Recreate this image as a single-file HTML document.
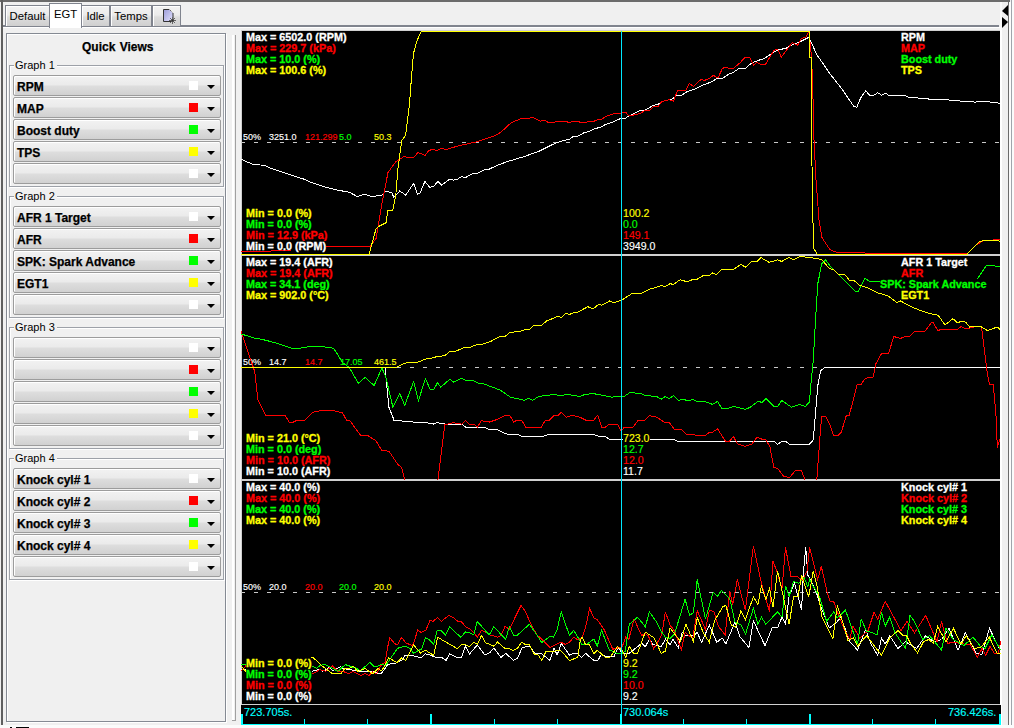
<!DOCTYPE html>
<html><head><meta charset="utf-8">
<style>
*{margin:0;padding:0;box-sizing:border-box}
html,body{width:1014px;height:728px;overflow:hidden;background:#f0f0f0;font-family:"Liberation Sans",sans-serif}
.a{position:absolute}
.tab{position:absolute;top:5px;height:21px;border:1px solid #80848e;border-bottom:none;box-shadow:inset 1px 1px 0 #fff;background:linear-gradient(#f3f3f3 0,#ebebeb 45%,#dddddd 55%,#cfcfcf 100%);font-size:11.3px;color:#000;text-align:center;line-height:19px}
.grp{position:absolute;left:9px;width:215px;height:122px;border:1px solid #9da1a8;box-shadow:inset 1px 1px 0 #fff,1px 1px 0 #fff}
.glab{position:absolute;left:14px;font-size:11px;background:#f0f0f0;padding:0 2px 0 1px;line-height:13px;color:#000}
.cb{position:absolute;left:13px;width:208px;height:21px;border:1px solid #9c9c9c;border-radius:2px;background:linear-gradient(#f2f2f2 0,#ebebeb 45%,#dddddd 55%,#d1d1d1 100%);box-shadow:inset 1px 1px 0 #fff}
.cb b{position:absolute;left:3px;top:4px;font-size:12px;line-height:14px;color:#000;-webkit-text-stroke:0.25px #000}
.cb i{position:absolute;left:175px;top:5px;width:9px;height:9px}
.cb s{position:absolute;left:193px;top:9px;width:0;height:0;border-left:4px solid transparent;border-right:4px solid transparent;border-top:4px solid #000}
.t{position:absolute;font-size:10.8px;font-weight:bold;line-height:11px;white-space:pre;background:#000;-webkit-text-stroke:0.3px currentColor}
.t.h{background:linear-gradient(#000 9px,transparent 9px)}
.v{position:absolute;font-size:10.6px;line-height:11px;white-space:pre;background:linear-gradient(#000 10px,transparent 10px);-webkit-text-stroke:0.15px currentColor}
.s{position:absolute;font-size:9px;line-height:9px;white-space:pre;-webkit-text-stroke:0.15px currentColor}
.W{color:#fff}.R{color:#f00}.G{color:#0f0}.Y{color:#ff0}.C{color:#0ff}
</style></head><body>
<!-- outer frame -->
<div class="a" style="left:0;top:0;width:1010px;height:2px;background:#6b6b6b"></div>
<div class="a" style="left:1px;top:0;width:2px;height:725px;background:#5f5f5f"></div>
<div class="a" style="left:1008px;top:0;width:1px;height:726px;background:#6b6b6b"></div>
<div class="a" style="left:1009px;top:2px;width:2px;height:724px;background:#fbfbfb"></div>
<div class="a" style="left:1011px;top:0;width:1px;height:726px;background:#a0a4ac"></div>
<div class="a" style="left:1012px;top:0;width:2px;height:728px;background:#fbfbfb"></div>
<div class="a" style="left:0;top:725px;width:1014px;height:3px;background:#fbfbfb"></div>
<div class="a" style="left:16px;top:727px;width:13px;height:1px;background:#000"></div>
<div class="a" style="left:10px;top:727px;width:2px;height:1px;background:#000"></div>

<!-- tab bar -->
<div class="a" style="left:3px;top:25px;width:996px;height:2px;background:#80848e"></div>
<div class="a" style="left:3px;top:27px;width:997px;height:1px;background:#fff"></div>
<div class="a" style="left:1000px;top:2px;width:2px;height:28px;background:#fafafa"></div>
<div class="tab" style="left:5px;width:45px"><span style="position:relative;top:1px">Default</span></div>
<div class="tab" style="left:81px;width:29px"><span style="position:relative;top:1px">Idle</span></div>
<div class="tab" style="left:110px;width:42px"><span style="position:relative;top:1px">Temps</span></div>
<div class="tab" style="left:152px;width:29px"></div>
<div class="tab" style="left:49px;top:3px;width:33px;height:25px;background:#fff;line-height:17px;box-shadow:none"><span style="position:relative;top:2px">EGT</span></div>
<svg class="a" style="left:160px;top:7px" width="18" height="18">
<defs><linearGradient id="dg" x1="0" y1="0" x2="1" y2="1"><stop offset="0" stop-color="#9c9cd8"/><stop offset="1" stop-color="#e4e4ff"/></linearGradient></defs>
<path d="M3.5,2.5 h6 l3.5,3.5 v8.5 h-9.5 z" fill="url(#dg)" stroke="#333" stroke-width="1"/>
<path d="M9.5,2.5 l3.5,3.5" stroke="#fff" stroke-width="1" stroke-dasharray="1 1"/>
<g stroke="#666" stroke-width="1"><path d="M12.5,10 v7 M9,13.5 h7 M10,11 l5,5 M15,11 l-5,5"/></g>
<rect x="11.5" y="12.5" width="2" height="2" fill="#333"/>
</svg>
<!-- scroll arrows -->
<svg class="a" style="left:1000px;top:0" width="10" height="32"><polygon points="2,11 8,5 8,16" fill="#000"/><polygon points="2,17 8,22 2,28" fill="#000"/></svg>

<!-- left panel -->
<div class="a" style="left:6px;top:33px;width:220px;height:689px;border:1px solid #858a93;box-shadow:inset 1px 1px 0 #fff,1px 1px 0 #fff"></div>
<div class="a" style="left:82px;top:40px;font-size:12px;font-weight:bold;line-height:14px;-webkit-text-stroke:0.25px #000;word-spacing:1px">Quick Views</div>

<div class="grp" style="top:65px"></div><div class="glab" style="top:59px">Graph 1</div>
<div class="cb" style="top:75px"><b>RPM</b><i style="background:#fff"></i><s></s></div>
<div class="cb" style="top:97px"><b>MAP</b><i style="background:#f00"></i><s></s></div>
<div class="cb" style="top:119px"><b>Boost duty</b><i style="background:#0f0"></i><s></s></div>
<div class="cb" style="top:141px"><b>TPS</b><i style="background:#ff0"></i><s></s></div>
<div class="cb" style="top:163px"><b></b><i style="background:#fff"></i><s></s></div>

<div class="grp" style="top:196px"></div><div class="glab" style="top:190px">Graph 2</div>
<div class="cb" style="top:206px"><b>AFR 1 Target</b><i style="background:#fff"></i><s></s></div>
<div class="cb" style="top:228px"><b>AFR</b><i style="background:#f00"></i><s></s></div>
<div class="cb" style="top:250px"><b>SPK: Spark Advance</b><i style="background:#0f0"></i><s></s></div>
<div class="cb" style="top:272px"><b>EGT1</b><i style="background:#ff0"></i><s></s></div>
<div class="cb" style="top:294px"><b></b><i style="background:#fff"></i><s></s></div>

<div class="grp" style="top:327px"></div><div class="glab" style="top:321px">Graph 3</div>
<div class="cb" style="top:337px"><b></b><i style="background:#fff"></i><s></s></div>
<div class="cb" style="top:359px"><b></b><i style="background:#f00"></i><s></s></div>
<div class="cb" style="top:381px"><b></b><i style="background:#0f0"></i><s></s></div>
<div class="cb" style="top:403px"><b></b><i style="background:#ff0"></i><s></s></div>
<div class="cb" style="top:425px"><b></b><i style="background:#fff"></i><s></s></div>

<div class="grp" style="top:458px"></div><div class="glab" style="top:452px">Graph 4</div>
<div class="cb" style="top:468px"><b>Knock cyl# 1</b><i style="background:#fff"></i><s></s></div>
<div class="cb" style="top:490px"><b>Knock cyl# 2</b><i style="background:#f00"></i><s></s></div>
<div class="cb" style="top:512px"><b>Knock cyl# 3</b><i style="background:#0f0"></i><s></s></div>
<div class="cb" style="top:534px"><b>Knock cyl# 4</b><i style="background:#ff0"></i><s></s></div>
<div class="cb" style="top:556px"><b></b><i style="background:#fff"></i><s></s></div>

<!-- splitter -->
<div class="a" style="left:232px;top:35px;width:2px;height:686px;background:#fff"></div>
<div class="a" style="left:235px;top:35px;width:1px;height:686px;background:#a0a0a0"></div>
<div class="a" style="left:232px;top:720px;width:4px;height:1px;background:#a0a0a0"></div>

<!-- chart area -->
<div class="a" style="left:241px;top:30px;width:761px;height:695px;background:#d0d0d0"></div>
<div class="a" style="left:242px;top:31px;width:758px;height:223px;background:#000"></div>
<div class="a" style="left:242px;top:256px;width:758px;height:223px;background:#000"></div>
<div class="a" style="left:242px;top:481px;width:758px;height:223px;background:#000"></div>
<div class="a" style="left:241px;top:705px;width:760px;height:20px;background:#000"></div>
<div class="a" style="left:1000px;top:30px;width:2px;height:675px;background:#fff"></div>
<div class="a" style="left:1001px;top:705px;width:1px;height:20px;background:#fff"></div>
<!-- 50% labels -->
<div class="s W" style="left:243px;top:133px">50%</div>
<div class="s W" style="left:269px;top:133px">3251.0</div>
<div class="s R" style="left:305px;top:133px">121.299</div>
<div class="s G" style="left:339px;top:133px">5.0</div>
<div class="s Y" style="left:374px;top:133px">50.3</div>
<div class="s W" style="left:243px;top:358px">50%</div>
<div class="s W" style="left:269px;top:358px">14.7</div>
<div class="s R" style="left:305px;top:358px">14.7</div>
<div class="s G" style="left:340px;top:358px">17.05</div>
<div class="s Y" style="left:374px;top:358px">461.5</div>
<div class="s W" style="left:243px;top:583px">50%</div>
<div class="s W" style="left:269px;top:583px">20.0</div>
<div class="s R" style="left:305px;top:583px">20.0</div>
<div class="s G" style="left:339px;top:583px">20.0</div>
<div class="s Y" style="left:374px;top:583px">20.0</div>


<svg class="a" style="left:0;top:0" width="1014" height="728">
<defs>
<clipPath id="c1"><rect x="241" y="31" width="760" height="224"/></clipPath>
<clipPath id="c2"><rect x="241" y="256" width="760" height="224"/></clipPath>
<clipPath id="c3"><rect x="241" y="481" width="760" height="223"/></clipPath>
</defs>
<g shape-rendering="crispEdges" fill="none" stroke-width="1">
<line x1="241" y1="142.5" x2="1000" y2="142.5" stroke="#c8c8c8" stroke-dasharray="4 9"/>
<line x1="241" y1="367.5" x2="1000" y2="367.5" stroke="#c8c8c8" stroke-dasharray="4 9"/>
<line x1="241" y1="592.5" x2="1000" y2="592.5" stroke="#c8c8c8" stroke-dasharray="4 9"/>
</g>
<g clip-path="url(#c1)" fill="none" stroke-width="1" shape-rendering="crispEdges">
<polyline stroke="#ffffff" points="241,159.3 253.8,164.7 264.7,165.2 271.6,168.6 285.4,173.1 299.2,177.9 305,179.4 311,182.4 322.8,186.4 338.6,190.3 349.5,192.3 357.4,196.6 364.3,194.2 372.2,196.6 382,195.2 386,190.9 391.9,192.9 393.8,197.2 399.8,190.9 405.7,195.2 413.6,183.4 417.5,194.2 420,193 424.9,181.5 429.9,187.5 433.8,186.1 437.8,181.5 441.7,185.1 449.6,179.2 453.5,180.2 457.5,179.2 461.4,176.6 465.4,177.6 473.3,173.3 477.2,173.3 485.1,169.3 489,169.3 496.9,165.4 506.8,161.8 514.7,159.4 524.5,156.5 540,150.8 545.9,147.8 552.8,144.4 557.8,142.4 563.7,140.4 569.6,139.4 572.5,137 577.5,136.5 583.4,133 589.3,131.4 595.2,128.6 601.1,127.1 605.1,124.7 609,123.2 614,121.7 618.9,119.2 621.9,118.2 625.8,118.2 628.8,115.8 634.7,113.3 640,110.4 644.9,110.4 652.8,105.7 658.2,104.2 664.7,100.8 672.5,98.8 676.5,95.6 681.4,95.6 687.3,91.4 695.2,89 703.1,85 711,82.1 716.9,78.6 721.9,78.6 728.8,74.2 733.7,72.2 738.9,68.4 745.3,68.4 751.7,63 759.6,60 762.5,59.5 769.4,55.1 775.4,51.1 779.3,49.7 786.2,48.2 793.1,44.2 799,42.3 808.9,37.3 816.8,54.6 830,73.8 841.8,88.8 847.8,97.7 853.8,106.3 856.8,107.3 860.8,97.7 865.7,90.7 869.7,95.3 873.7,95.3 877.7,92.7 881.7,95.3 885.7,93.3 888.6,95.3 905.6,95.7 908.6,97.3 919.5,98.1 931.5,99.3 951.4,100.1 963.3,101.3 975.3,102.1 979.3,101.3 991.2,102.1 1000,103.3"/>
<polyline stroke="#ff0000" points="241,251 271,251 272,250 291,250 296,247 370.2,246.5 376,238.6 382,203 388,172.5 395.8,161.7 403.7,156.8 413.6,157.8 417.5,152.8 420,153.1 424.9,155.5 428.9,150.6 432.8,149.2 436.8,150.6 441.7,148.2 445.6,149.6 459.4,145.6 477.2,141.7 495,135.8 500.9,132.2 511.2,122.7 522,118.3 527,118.7 532.9,117.3 540,121.2 544.4,120.2 548.4,122.5 554.8,122.5 555.8,121.2 566.6,121.2 568.1,122.5 570.6,122.5 571.6,121.2 578.5,121.2 579.9,122.5 586.4,122.5 587.8,121.2 594.2,121.2 596.2,120.2 602.1,119.2 605.1,116.8 609,115.3 615,113.3 620.9,113.3 623.8,112.3 625.8,112.3 628.8,115.8 634.7,114.8 640,113.6 645.9,110 649.9,110.4 653.8,106.2 658.2,106.4 661.7,101.5 668.6,99.8 671.6,100.3 673.5,101.3 677.5,90.4 685.9,90.4 689.3,83.3 693.3,86.5 699.2,80.6 701.6,79.4 704.1,80.6 709,78.6 713.5,75.4 717.9,78.1 722.3,68.7 724.8,67.3 726.8,67.6 728.8,68.5 733.2,68.5 739.9,63 744.8,57.5 749.7,57.5 753.7,65 756.6,62.5 760.6,64.4 765.5,64.4 773.4,51.1 776.4,49.2 778.3,50.1 781.3,57.1 792.1,42.8 798,45.2 801,38.8 805,37.3 806.4,36.8 808.9,30.9 811.6,57.5 812.4,80.2 812.8,90 814,140 816,179.8 819,219.7 822,237.6 829.9,249.6 836.9,252.5 859.8,252.5 869.7,253.5 967.3,253.5 975.3,245.6 983.3,240.6 1000,239.6"/>
<polyline stroke="#ffff00" points="241,254 369.2,254 376,228.8 378,226.8 386,222.8 388,210 392.9,210 395.8,195.2 397.8,169.6 400.7,148 401.7,140.4 405.6,135.5 409.6,103 411.6,75.3 413.5,53.6 416.5,41.8 421.4,31 809.5,31 809.5,57.5 811,57.5 811,113.7 812,165.9 812.9,219.7 813.9,248.6 817,254 967.3,254 973.3,247.6 979.3,242 985.3,240 997.2,240 1000,241.6"/>
</g>
<g clip-path="url(#c2)" fill="none" stroke-width="1" shape-rendering="crispEdges">
<polyline stroke="#ffffff" points="241,367.5 385,367.5 387,387.6 388.9,407.3 392.9,417.2 393.8,420.2 413.6,422.1 429.3,423.1 433.3,424.1 436.9,422.7 445.8,424.1 461.6,424.1 465.5,427.1 485.2,427.5 489.2,429.4 498,430 503,432.6 508.9,434.6 517.8,434.6 520.7,436 544.4,436 548.3,434.6 593.7,434.6 597.7,436 605.5,436.5 609.5,439.3 674.2,439.3 677.2,441.3 773.8,441.3 777.8,444.4 781.7,441.3 785.7,441.3 789.6,444.4 809.3,444.4 813.3,439.9 815.8,409.3 817.8,385.6 820.7,370.8 824.7,367.5 1000,367.5"/>
<polyline stroke="#ff0000" points="241,331 254.8,371.8 257.8,399.4 265.6,415.2 285.4,415.6 289.3,422.7 293.3,422.1 297.2,420.2 305.1,420.2 313,412.3 322.8,410.3 332.7,410.3 342.6,412.9 346.5,420.2 349.5,420.2 360.3,435 368.2,435.9 376.1,440.9 382,450.7 388.9,451.1 397.8,464.5 401.7,467.5 404.7,480"/>
<polyline stroke="#ff0000" points="437.9,480 444.8,424.7 453.7,422.7 461.6,424.1 465.5,420.7 469.4,424.1 474.4,424.1 477.3,427.1 481.3,420.7 489.2,422.1 498,419.2 505,415.6 509.9,415.6 513.8,422.1 516.8,420.2 521.7,420.2 525.7,427.1 541.4,427.1 545.4,420.2 549.3,420.2 554.3,415.2 558.2,415.2 561.2,412.3 566.1,417.2 572,415.2 579.9,417.2 585.8,420.2 593.7,420.2 597.7,415.2 601.6,427.1 605.5,427.1 609.5,424.1 617.4,424.1 621.3,431 624,427.5 632.8,427.5 637.8,420.7 644.7,420.2 649.6,415.6 656.5,417.2 664.4,422.1 669.3,422.7 674.2,429 681.1,429 686.1,434 693,434 696.9,435.9 704.8,435.9 709.7,432 712.7,432 717.6,429 725.5,441.3 729.5,441.3 733.4,436.5 737.4,443.8 745.2,446.4 752.2,443.8 757.1,436.9 762,439.3 766,439.9 769.9,446.8 773.8,467.5 777.8,468.5 783.7,476.4 789.6,477.4 795.5,470.5 801.5,470.5 805,480"/>
<polyline stroke="#ff0000" points="816.8,480 819.8,438.9 821.7,416.2 825.7,416.2 829.6,424.1 833.6,435.9 837.5,435.9 841.4,432 846.4,415.2 849.3,415.2 857.2,384.7 861.2,384.1 865.1,378.7 869.1,377.4 873,377.4 876,363.5 881.9,353 888.8,353 893.7,336.5 900.6,338.4 905.5,336.5 909.5,336.5 914.4,331.3 925.3,331 931.2,322.7 933.2,322.7 938.1,331 940.1,329.4 957.8,329.4 960.8,326.6 965.7,329 975.6,326.6 981.5,326.6 987.4,374.3 989.4,384.1 993.3,384.7 996.3,419.2 997.3,447.8 1000,438.9"/>
<polyline stroke="#00ff00" points="241,333.9 253.8,337.9 263.7,339.8 275.5,342.8 292.3,348.3 299.2,348.3 311,346.3 322.8,346.7 333.7,348.3 342.6,362.5 349.5,367.9 358.3,383.3 365.2,377.4 374.1,385.6 382,367.9 386,377.8 392.9,407.3 399.8,393.5 404.7,405.4 413.6,381.7 418.5,400.4 425.4,378.7 430.3,389.6 434,389.2 437.5,382.7 440.8,387.2 449.7,379.3 453.7,382.1 461.6,378.3 466.5,380.7 472.4,380.1 478.3,383.3 483.3,383.7 500,390 510.9,397.5 516.8,398.5 524.7,400.4 528.6,398.1 532.6,400.4 538.5,396.5 546.4,395.5 553.3,394.5 560.2,395.5 568.1,394.5 579.9,396.5 584.8,394.5 592.7,393.5 603.6,395.5 611.5,397.1 619.3,396.5 624,396.5 629.9,392.5 640.7,393.5 645.6,395.5 656.5,396.5 661.4,399.1 665.4,396.5 669.3,398.5 673.6,395.5 678.2,400.4 683.1,399.1 688,401 693,399.4 696.9,401.4 702.8,401 712.7,404.4 717.6,401.4 721.6,408.3 728.5,408.3 733.4,406.4 738.3,407.7 745.2,409.3 750.2,407.3 758.1,401.4 762,402.4 766,398.5 773.8,406.4 777.8,406.4 781.7,400.4 791.6,407.3 799.5,404.4 805.4,406.4 809.5,401.8 810.9,383.7 813.3,360 815.8,315.2 817.8,283.6 821.7,263.9 825.7,260 831.6,267.8 841.4,277.3 855.3,291.5 858.2,291.5 865.1,278.1 870,282 877,281.5 900,284 950,284 976,281 978.5,277.3 986.4,265.5 1000,266.3"/>
<polyline stroke="#ffff00" points="241,367.5 395.8,367.5 401.7,364.5 407.6,362.5 417.5,362.1 427.4,358.6 430,358.6 436.9,356.6 444.8,355.6 449.7,351.7 454.7,351.7 463.5,347.7 470.4,347.1 477.3,344.4 482.3,344.4 491.1,341.2 500,336.5 505,336.5 509.9,332.5 520.7,331.3 523.7,330 529.6,329.4 533.5,325.4 541.4,325.4 546.4,321.1 558.2,316.2 561.2,317.5 566.1,313.2 569.1,314.6 574,312.6 577.9,312.2 587.8,306.7 593.3,308.9 598.6,304.3 601.6,305.3 609.5,301 613.4,302.7 621.3,300.4 625.9,297.4 632.8,293.1 641.7,293.1 649.6,289.1 654.5,288 661.4,285.6 665.4,286.6 670.3,283.6 673.3,284.6 680.2,279.7 685.1,281.2 689,281.2 693,279.3 696.9,279.3 703.8,275.3 709.7,275.3 712.7,272.8 716.6,274.7 721.6,269.4 733.4,269.4 741.3,264.3 745.2,267.4 751.2,261.9 757.1,261.5 761,257.6 768.9,262.3 777.8,259.9 781.7,261.5 788.6,257.6 793.6,259.6 800.5,256.4 805.4,257 811.3,257.6 821.7,259.6 825.7,264.3 829.6,268.8 833.6,269.4 838.5,274.7 844.4,274.1 849.3,280.1 854.3,280.7 859.2,285.2 869.1,288.5 877.9,293.1 883.9,294.5 888.8,296.4 896.7,302.4 900.6,301 910.5,306.3 919.4,310.2 928.2,313.2 938.1,315.2 945,325 952.9,318.7 957.8,323.1 960.8,321.1 965.7,322.1 969.7,327 975.6,326 981.5,327 987.4,330.6 997.3,327 1000,329.4"/>
</g>
<g clip-path="url(#c3)" fill="none" stroke-width="1" shape-rendering="crispEdges">
<polyline stroke="#ffffff" points="241,669 280,670 312,671.2 319.9,669.2 322.8,671.2 326.5,669.6 328.7,667.3 332.7,670.7 340.7,666.7 343.1,668.5 353.1,670.2 361.4,671.4 372.1,671.4 378,673.2 381.5,673.2 388,664.3 395.7,663.1 401.7,660.2 405.2,655.4 412.3,655.4 418.2,657.2 421.8,657.2 425.3,653.7 430,655.1 435.9,657.2 441.8,657.5 446,660.4 449.5,653.9 457.2,657.5 461.4,657.5 465.5,646.2 469.6,653.9 477.3,645 485,655.1 489.8,652.7 493.9,648 501,657.5 505.7,653.3 513.4,660.4 517.6,658 522.3,647.4 529.4,646.2 535.3,653.9 541.2,653.3 550,660.4 554.1,648 557.1,655.1 561.2,643.3 569.5,655.1 573.7,653.3 577.8,653.3 581.4,657.5 585.5,653.3 593.8,660.4 597.9,660.4 601.5,653.9 605.6,656.9 613.9,656.9 618,647.4 622.2,653.3 629.3,653.3 641.7,643.3 645.3,646.8 649.4,639.1 653,644.4 661.2,646.8 665.4,639.1 670,644.6 673,639.3 678.3,647.7 682.1,632.5 685.9,635.6 693.4,635.6 697.2,632.5 701.7,642.4 709.3,625 716.8,642.4 722.1,637.8 725.9,643.9 735,622 740,636.8 748.9,647.5 753.4,620.7 765,645.7 772.1,627.9 777.5,627.9 782,617.1 785.5,624.3 789.1,596.6 794.5,583.2 801.6,610 803.4,572.5 805.7,547.5 807.9,575.2 811.4,581.4 816.8,593.9 822.1,610 829.3,627.9 836.4,622.5 840.9,617.1 848,636.8 850,641.7 857.5,650 865.7,629.7 871,644 877.7,655.2 881.5,638 885.2,644 889.7,635.7 898,648.5 905.5,641.7 916.7,648.5 925.7,635.7 934,641.7 941.5,639.5 949,628.2 958,650 965.4,632.7 976,653 982,654.5 989.4,628.2 1000.7,651.5"/>
<polyline stroke="#ff0000" points="241,671.2 245.9,665.8 280,669 313,673.7 319.9,669.7 325.8,671.2 328.9,668.5 332.4,666.1 335.4,669.1 338.9,671.4 343.1,671.4 348.4,673.8 353.1,671.4 360.8,675.6 365,673.6 369.1,675.6 372.7,672 376.8,673.8 380.4,666.1 382.7,663.7 385.1,662.5 387.5,647.8 389.8,637.7 394.6,643.6 397.5,644.8 401.7,637.3 405.8,643 412.3,645.4 414.7,640.1 417.6,630 421.2,632.4 425.9,630 430,620.5 433,621.4 437.7,617.5 441.2,621.4 448.9,615.4 453.7,617.8 457.8,621.4 461.4,621.7 466.1,627.3 470.2,629.1 473.8,632.6 477.3,637.3 481.5,630.2 485.6,632 489.8,635 493.3,635.6 497.5,637.3 501,635.6 505.1,626.4 509.3,629.1 521.1,605.4 525.3,611.3 529.4,620.8 536.5,634.4 543.6,640.9 550,647.4 560.7,642.1 565.4,644.4 569.5,642.1 573.7,637.3 577.8,639.7 582,637.3 585.5,627.9 589.6,608.3 593.8,617.8 597.3,619.6 604.4,630.2 612.7,649.2 617.5,648 622.2,646.8 625.7,637.3 628.7,639.7 634,619 641.7,635.6 644.7,633.2 648.2,635.6 653.6,648.6 657.1,643.3 661.8,634.4 665.4,611.9 670,625 674.5,631 681.3,649.9 685.1,632.5 692.7,638.6 697.2,610.6 705.5,629.5 709.3,610.6 713.8,611.4 718.4,626.5 725.2,634.8 729.7,591 732.7,604.6 737.3,579.6 740,590.4 745.4,610 753.4,545.7 761.4,583.2 769.5,611.8 773,560.9 777.5,573.4 782,588.6 785.5,547.5 790.9,576.1 798,577 802.5,580.5 807,570.7 809.6,547.5 817.7,579.6 821.3,566.3 827.5,593.9 830.2,601.1 833.8,602 837.3,611.8 843.6,627.9 849.8,639.5 853,626 859.7,638 868,630.5 874,612.5 877.7,619.2 885.2,601.2 901,630.5 907,621.5 914.5,632.7 925.7,615.5 937,641.7 941.5,621.5 947.5,643.2 955,642.5 964,644 970,644 977.4,657.5 982,648.5 985.7,655.2 990.2,646.2 994,653 998.4,653.7 1000.7,641"/>
<polyline stroke="#00ff00" points="241,664.6 246,664.6 280,666 312,666.3 316.9,668.2 320,665.5 324.7,664.3 331.8,667.9 337.8,671.4 345.4,664.6 351.4,666.7 355.5,667.9 360.8,670.8 369.7,662.2 373.8,666.4 378,666.1 381.5,664.3 385.7,665.5 391,657.8 397.5,648.3 405.2,646 409.9,648.3 413.5,653.1 419.4,650.1 421.8,648.9 425.3,637.7 430,640.3 433.6,644.4 437.1,630.8 441.2,630.8 445.4,635 449.5,626.7 460.8,637.3 465.5,632 469.1,632.4 473.8,635 477.3,621.4 489.2,635 493.9,626.7 501,634.4 505.7,639.1 509.3,626.7 513.4,635 517.6,635 529.4,624.3 536.5,634.4 541.8,642.7 550,636.2 553.6,637.3 557.1,629.6 561.2,611.9 569.5,635.6 573.7,630.2 582,644.4 586.7,644.4 593.8,639.1 597.3,646.2 601.5,630.2 609.2,649.8 617.5,653.9 621,653.9 625.1,651.5 629.3,624.3 637.6,617.2 645.3,626.7 649.4,611.9 656.5,622 661.2,631.4 665.4,637.3 670,638.6 674.5,634 685.1,599.3 689.6,615.2 693.4,612.9 697.2,579.6 705.5,618.9 713.1,592.5 717.6,596.3 721.4,590.2 729.7,598.5 735,622 741,625 745.6,634.1 753.4,608.2 757.9,624.3 761.4,617.1 765.9,624.3 777.5,611.8 782,617.1 785.5,585.9 789.1,596.6 793.6,581.4 798.9,583.2 804.3,577.9 807.9,586.8 809.6,579.6 814.1,587.7 819.5,596.6 826.6,621.6 833.8,611.8 837.3,618 845.4,610 850,623 857.5,644 861.2,619.2 866.5,631.2 872.5,632.7 877,635 881.5,612.5 885.2,626 889.7,617 895,632.7 905.5,648.5 910,615.5 914.5,621.5 922.7,639.5 929.5,635.7 941.5,650 946,628.2 953.4,639.5 964,645.5 973,637.2 980.4,646.2 985,648.5 991.7,635 1000.7,650"/>
<polyline stroke="#ffff00" points="241,665.8 245.9,671.7 280,668 313,657.4 321.8,665.8 326.5,669.1 331.8,673.2 341.3,673.2 344.9,668.5 349.6,668.5 353.1,666.1 357.9,671.4 365,668.5 372.7,673.8 378,668.5 381.5,670.8 384.5,666.1 388.6,657.8 396.9,662.5 401.7,657.8 405.8,660.8 413.5,644.8 420.6,653.1 425.3,650.1 433.6,655.4 437.7,637.3 448.9,643.8 457.2,648.6 461.4,644.4 465.5,644.7 469.6,646.6 473.8,642.3 477.3,644.2 481.5,635.6 485.6,642.7 493.9,646.2 497.5,642.1 504.6,648.2 509.3,648.6 513.4,650.6 517.6,648 521.7,642.3 524.7,644.2 529.4,644.4 534.1,653.9 538.3,655.1 541.8,660.4 546,651.5 550,651.5 560.7,650.4 569.5,660.4 577.8,657.5 580.2,640.9 582,637.3 585.5,644.4 589.1,644.4 593.8,653.9 597.3,650.4 605.6,657.5 609.8,657.5 617.5,646.6 622.2,650.4 625.7,657.5 629.3,646.2 633.4,653.3 637.6,653.3 645.3,632 654.1,637.9 661.2,653.3 665.4,651 670,628 680.6,641.6 685.9,624.2 693.4,641.6 697.2,617.4 703.2,632.5 709.3,642.4 714.6,620.4 722.9,606.8 725.9,605.3 731.2,625 735.7,627.3 741,610.6 745.4,619.8 753.4,596.6 757.9,604.6 761.4,585.9 765.9,599.3 769.5,588.6 773,607.3 777.5,570.7 782.9,594.8 789.1,624.3 793.6,596.6 798,596.6 801.6,575.2 805.2,586.8 808.8,596.6 813.2,570.7 816.8,585 822.1,617.1 832.9,638.6 837.3,605.5 841.8,618.9 848,640.4 853.4,637.7 857.5,646.2 866.5,635.7 881.5,655.2 889.7,638 898,630.5 902.5,635 906.2,635 910,642.5 917.5,653 923.5,641.7 928.7,639.5 933.2,643.2 937.7,626.7 946,641.7 953.4,628.2 961,644 966.2,635.7 974.4,648.5 981.2,647 989.4,637.2 997,653 1000.7,653"/>
</g>

<g shape-rendering="crispEdges" fill="none" stroke-width="1">
<line x1="621.5" y1="31" x2="621.5" y2="725" stroke="#00e8ff"/>
<line x1="241" y1="724.5" x2="1001" y2="724.5" stroke="#0ff"/>
</g>
<g fill="#0ff" shape-rendering="crispEdges">
<rect x="241" y="714" width="2" height="11"/>
<rect x="430" y="714" width="2" height="11"/>
<rect x="620" y="714" width="2" height="11"/>
<rect x="809" y="714" width="2" height="11"/>
<rect x="999" y="714" width="2" height="11"/>
<rect x="304" y="719" width="1" height="6"/>
<rect x="367" y="719" width="1" height="6"/>
<rect x="494" y="719" width="1" height="6"/>
<rect x="557" y="719" width="1" height="6"/>
<rect x="683" y="719" width="1" height="6"/>
<rect x="746" y="719" width="1" height="6"/>
<rect x="872" y="719" width="1" height="6"/>
<rect x="935" y="719" width="1" height="6"/>
</g>
</svg>

<!-- graph 1 labels -->
<div class="t W" style="left:246px;top:32px">Max = 6502.0 (RPM)</div>
<div class="t R" style="left:246px;top:43px">Max = 229.7 (kPa)</div>
<div class="t G" style="left:246px;top:54px">Max = 10.0 (%)</div>
<div class="t Y" style="left:246px;top:65px">Max = 100.6 (%)</div>
<div class="t Y" style="left:246px;top:208px">Min = 0.0 (%)</div>
<div class="t G" style="left:246px;top:219px">Min = 0.0 (%)</div>
<div class="t R" style="left:246px;top:230px">Min = 12.9 (kPa)</div>
<div class="t W h" style="left:246px;top:241px">Min = 0.0 (RPM)</div>
<div class="t W" style="left:901px;top:32px">RPM</div>
<div class="t R" style="left:901px;top:43px">MAP</div>
<div class="t G" style="left:901px;top:54px">Boost duty</div>
<div class="t Y" style="left:901px;top:65px">TPS</div>

<!-- graph 2 labels -->
<div class="t W" style="left:246px;top:257px">Max = 19.4 (AFR)</div>
<div class="t R" style="left:246px;top:268px">Max = 19.4 (AFR)</div>
<div class="t G" style="left:246px;top:279px">Max = 34.1 (deg)</div>
<div class="t Y" style="left:246px;top:290px">Max = 902.0 (°C)</div>
<div class="t Y" style="left:246px;top:433px">Min = 21.0 (°C)</div>
<div class="t G" style="left:246px;top:444px">Min = 0.0 (deg)</div>
<div class="t R" style="left:246px;top:455px">Min = 10.0 (AFR)</div>
<div class="t W" style="left:246px;top:466px">Min = 10.0 (AFR)</div>
<div class="t W" style="left:901px;top:257px">AFR 1 Target</div>
<div class="t R" style="left:901px;top:268px">AFR</div>
<div class="t G" style="left:880px;top:279px">SPK: Spark Advance</div>
<div class="t Y" style="left:901px;top:290px">EGT1</div>

<!-- graph 3 labels -->
<div class="t W" style="left:246px;top:482px">Max = 40.0 (%)</div>
<div class="t R" style="left:246px;top:493px">Max = 40.0 (%)</div>
<div class="t G" style="left:246px;top:504px">Max = 40.0 (%)</div>
<div class="t Y" style="left:246px;top:515px">Max = 40.0 (%)</div>
<div class="t Y" style="left:246px;top:658px">Min = 0.0 (%)</div>
<div class="t G" style="left:246px;top:669px">Min = 0.0 (%)</div>
<div class="t R" style="left:246px;top:680px">Min = 0.0 (%)</div>
<div class="t W" style="left:246px;top:691px">Min = 0.0 (%)</div>
<div class="t W" style="left:901px;top:482px">Knock cyl# 1</div>
<div class="t R" style="left:901px;top:493px">Knock cyl# 2</div>
<div class="t G" style="left:901px;top:504px">Knock cyl# 3</div>
<div class="t Y" style="left:901px;top:515px">Knock cyl# 4</div>

<!-- cursor values -->
<div class="v Y" style="left:623px;top:208px">100.2</div>
<div class="v G" style="left:623px;top:219px">0.0</div>
<div class="v R" style="left:623px;top:230px">149.1</div>
<div class="v W" style="left:623px;top:241px">3949.0</div>
<div class="v Y" style="left:623px;top:433px">723.0</div>
<div class="v G" style="left:623px;top:444px">12.7</div>
<div class="v R" style="left:623px;top:455px">12.0</div>
<div class="v W" style="left:623px;top:466px">11.7</div>
<div class="v Y" style="left:623px;top:658px">9.2</div>
<div class="v G" style="left:623px;top:669px">9.2</div>
<div class="v R" style="left:623px;top:680px">10.0</div>
<div class="v W" style="left:623px;top:691px">9.2</div>

<!-- timeline labels -->
<div class="v C" style="left:244px;top:707px;font-size:11px">723.705s.</div>
<div class="v C" style="left:623px;top:707px;font-size:11px">730.064s</div>
<div class="v C" style="left:948px;top:707px;font-size:11px">736.426s.</div>
</body></html>
